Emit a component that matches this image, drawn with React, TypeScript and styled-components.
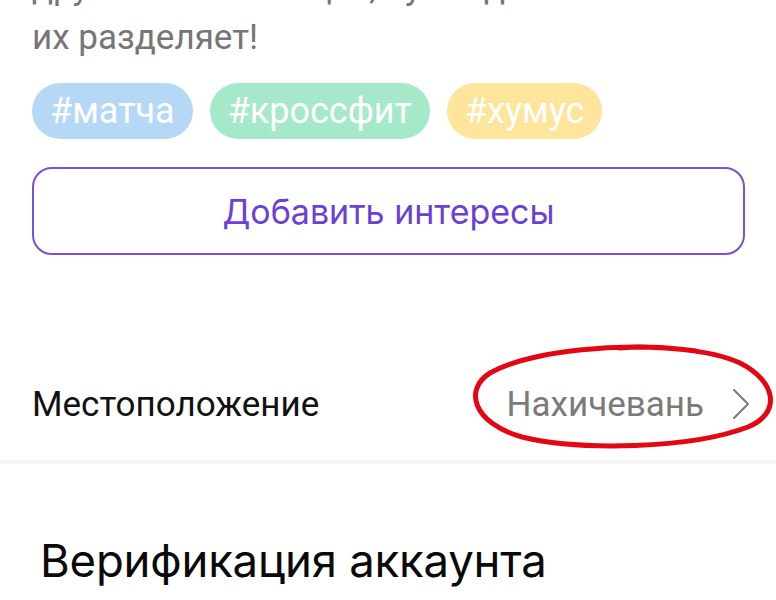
import React from "react";
import styled, { createGlobalStyle } from "styled-components";

const GlobalStyle = createGlobalStyle`
  html, body {
    margin: 0;
    padding: 0;
    background: #ffffff;
  }
  body {
    font-family: Roboto, "Noto Sans", sans-serif;
    overflow: hidden;
  }
`;

const Page = styled.div`
  width: 776px;
  height: 600px;
  overflow: hidden;
  background: #ffffff;
`;

const Section = styled.section`
  padding: 0 31px 0 32px;
`;

const Intro = styled.p`
  margin: -37px 0 0;
  font-family: Roboto, sans-serif;
  font-size: 35px;
  line-height: 50px;
  color: #767676;
  white-space: nowrap;
`;

const TagRow = styled.div`
  display: flex;
  gap: 17px;
  margin-top: 20px;
`;

const Tag = styled.span<{ $bg: string }>`
  display: inline-flex;
  align-items: center;
  height: 56px;
  padding: 0 18px;
  border-radius: 28px;
  background: ${(p) => p.$bg};
  color: #ffffff;
  font-family: Roboto, sans-serif;
  font-size: 36px;
`;

const AddButton = styled.button`
  display: flex;
  align-items: center;
  justify-content: center;
  width: 100%;
  height: 88px;
  margin-top: 28px;
  border: 2px solid #7a50d4;
  border-radius: 20px;
  background: #ffffff;
  color: #6c3fd6;
  font-family: Inter, sans-serif;
  font-size: 34px;
  font-weight: 400;
`;

const LocationRow = styled.div`
  position: relative;
  display: flex;
  align-items: center;
  justify-content: space-between;
  height: 112px;
  margin-top: 93px;
  padding: 0 26px 0 32px;
`;

const RowLabel = styled.span`
  font-family: Roboto, sans-serif;
  font-size: 35px;
  color: #111111;
`;

const RowValue = styled.span`
  display: flex;
  align-items: center;
  gap: 28px;
  font-family: Roboto, sans-serif;
  font-size: 35px;
  color: #7a7a7a;
`;

const Circled = styled.svg`
  position: absolute;
  left: 470px;
  top: -5px;
  width: 306px;
  height: 108px;
  pointer-events: none;
`;

const Divider = styled.div`
  height: 4px;
  background: #f5f5f5;
`;

const Heading = styled.h2`
  margin: 69px 0 0 40px;
  font-family: Inter, sans-serif;
  font-size: 45.5px;
  font-weight: 400;
  color: #0a0a0a;
  letter-spacing: -0.2px;
`;

const tags = [
  { label: "#матча", bg: "#b5d8f6" },
  { label: "#кроссфит", bg: "#a5e9c9" },
  { label: "#хумус", bg: "#fde59c" },
];

export default function App() {
  return (
    <Page>
      <GlobalStyle />
      <Section>
        <Intro>
          другим найти общее, пусть даже многое
          <br />
          их разделяет!
        </Intro>
        <TagRow>
          {tags.map((t) => (
            <Tag key={t.label} $bg={t.bg}>
              {t.label}
            </Tag>
          ))}
        </TagRow>
        <AddButton>Добавить интересы</AddButton>
      </Section>
      <LocationRow>
        <RowLabel>Местоположение</RowLabel>
        <RowValue>
          Нахичевань
          <svg width="18" height="30" viewBox="0 0 18 30">
            <path
              d="M2 1 L16 15 L2 29"
              fill="none"
              stroke="#7a7a7a"
              strokeWidth="2"
              strokeLinecap="round"
              strokeLinejoin="round"
            />
          </svg>
        </RowValue>
        <Circled viewBox="0 0 306 108">
          <path
            d="M226 8 C 150 -2, 60 8, 20 30 C -6 46, 2 80, 52 94 C 110 108, 220 106, 278 84 C 312 70, 306 38, 270 20 C 240 6, 180 2, 150 5"
            fill="none"
            stroke="#e30613"
            strokeWidth="5"
            strokeLinecap="round"
          />
        </Circled>
      </LocationRow>
      <Divider />
      <Heading>Верификация аккаунта</Heading>
    </Page>
  );
}
